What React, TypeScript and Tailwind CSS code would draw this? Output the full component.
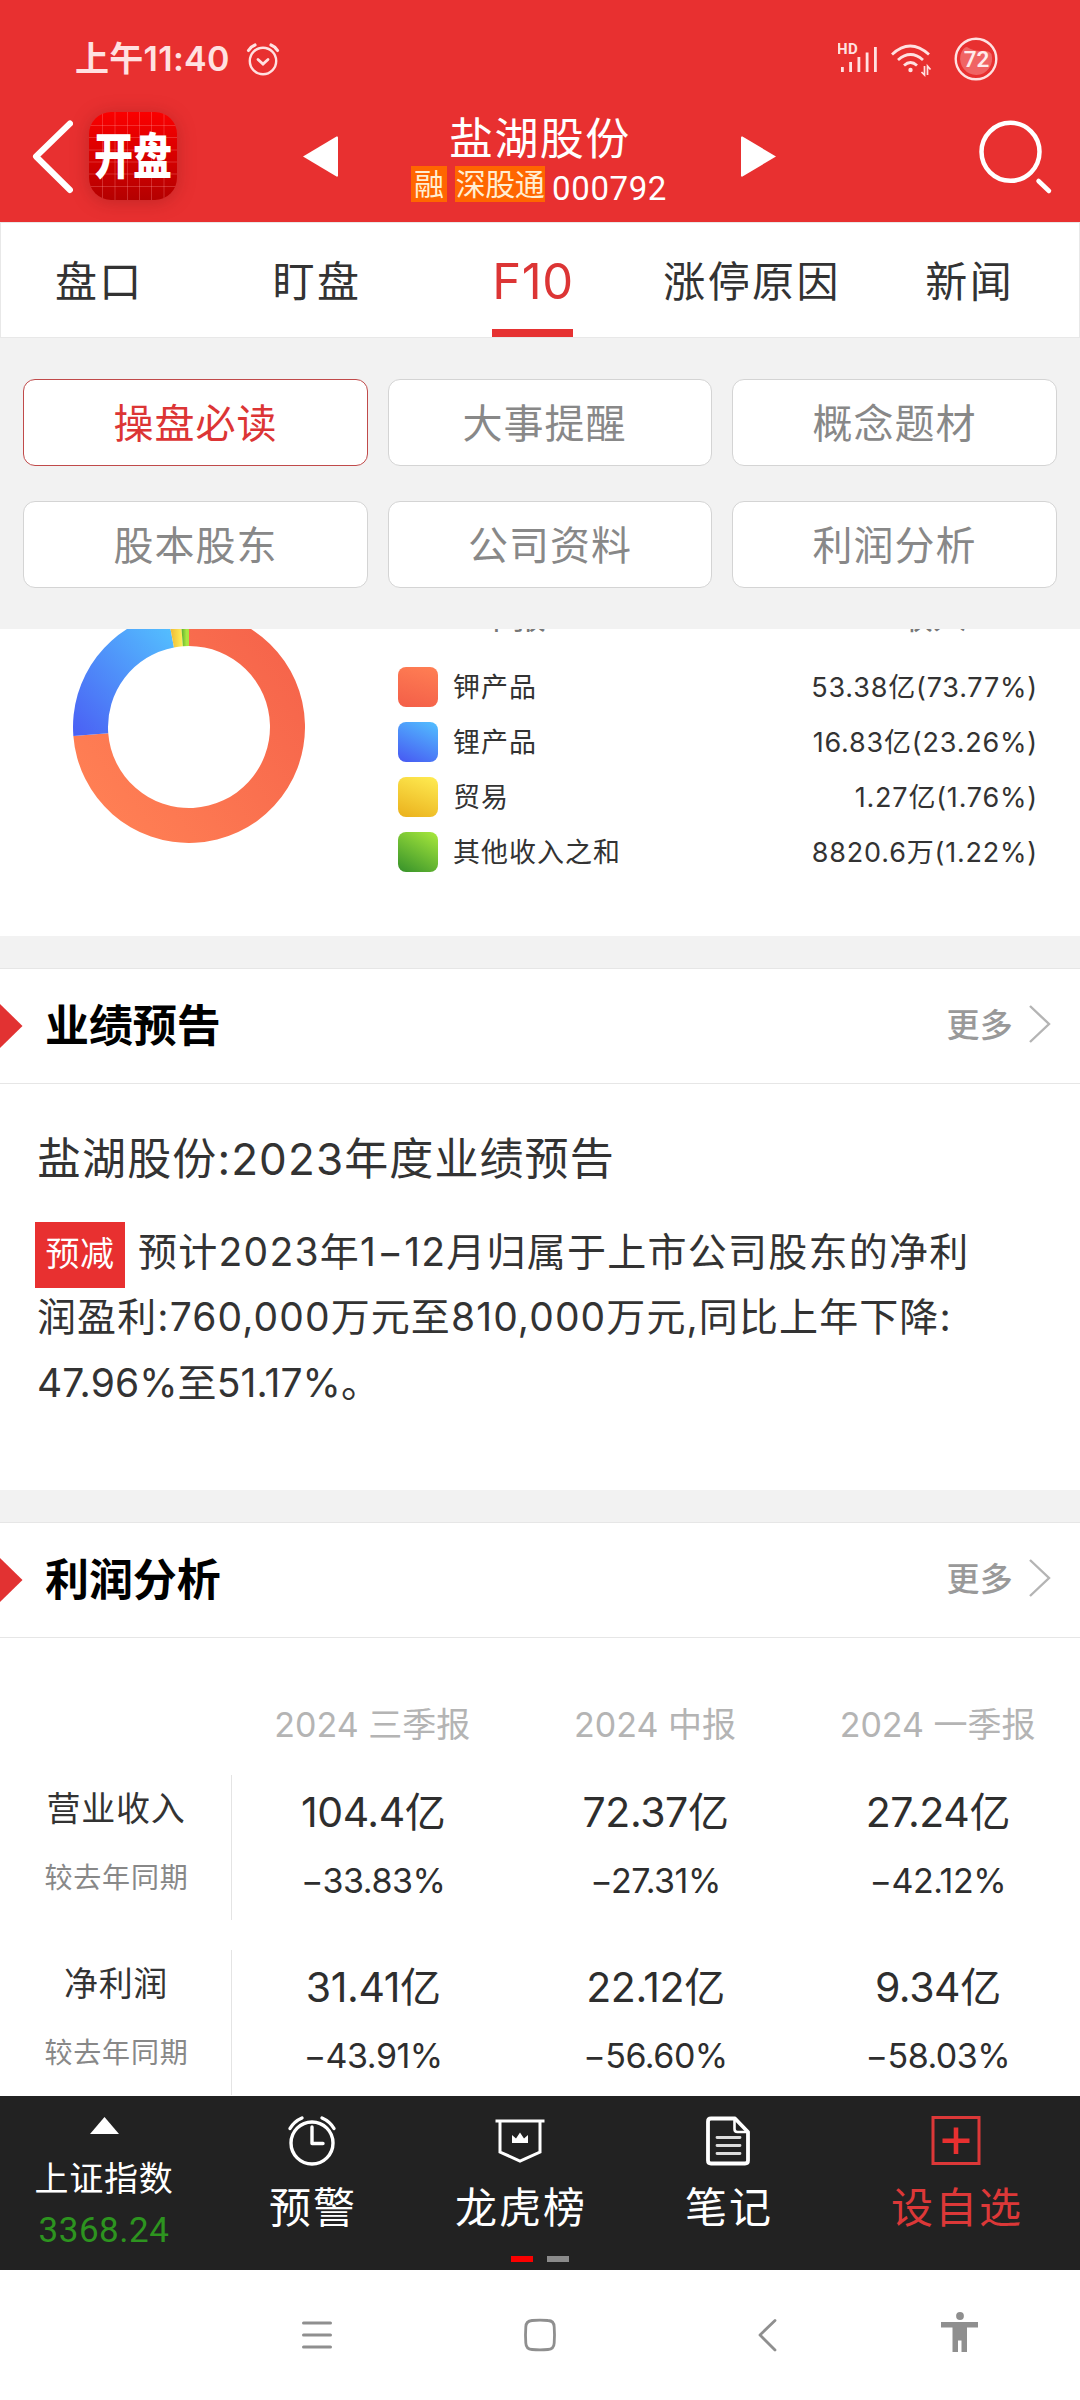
import { useState } from 'react'
import clsx from 'clsx'

const TABS = ['盘口', '盯盘', 'F10', '涨停原因', '新闻'] as const

const CATEGORIES = ['操盘必读', '大事提醒', '概念题材', '股本股东', '公司资料', '利润分析'] as const

const PRODUCTS = [
  { name: '钾产品', value: '53.38亿(73.77%)', share: 73.77, swatch: 'bg-linear-[15deg] from-[#f35e48] to-[#ff7f54]' },
  { name: '锂产品', value: '16.83亿(23.26%)', share: 23.26, swatch: 'bg-linear-[25deg] from-[#4757f2] to-[#52c0ff]' },
  { name: '贸易', value: '1.27亿(1.76%)', share: 1.76, swatch: 'bg-linear-[20deg] from-[#eab01c] to-[#ffec52]' },
  { name: '其他收入之和', value: '8820.6万(1.22%)', share: 1.22, swatch: 'bg-linear-[30deg] from-[#35912a] to-[#a9e93c]' },
]

const PERIODS = ['2024 三季报', '2024 中报', '2024 一季报']

const PROFIT_ROWS = [
  {
    label: '营业收入',
    cells: [
      { amount: '104.4亿', change: '−33.83%' },
      { amount: '72.37亿', change: '−27.31%' },
      { amount: '27.24亿', change: '−42.12%' },
    ],
  },
  {
    label: '净利润',
    cells: [
      { amount: '31.41亿', change: '−43.91%' },
      { amount: '22.12亿', change: '−56.60%' },
      { amount: '9.34亿', change: '−58.03%' },
    ],
  },
]

function StatusBar() {
  return (
    <div className="flex h-[82px] items-center pl-[75px] pr-[82px] pt-[36px] text-[#ffe1e1]">
      <span className="text-[34px] font-semibold leading-[46px] tracking-[0.3px]">上午11:40</span>
      <svg className="ml-[16px]" width="34" height="34" viewBox="0 0 34 34" fill="none" stroke="currentColor" strokeWidth="2.4" strokeLinecap="round">
        <circle cx="17" cy="19" r="13.2" />
        <path d="M2.5 8.5Q5 4.5 9 3M31.5 8.5Q29 4.5 25 3" strokeWidth="3.2" />
        <path d="M12 17.5L17 22L22 17.5" strokeWidth="2.8" />
      </svg>
      <div className="ml-auto flex items-center">
        <svg width="44" height="36" viewBox="0 0 44 36" fill="currentColor">
          <text x="-1" y="13" fontSize="15" fontWeight="700" fontFamily="Roboto, sans-serif" letterSpacing="0.4">HD</text>
          <rect x="3" y="26" width="2.8" height="5" />
          <rect x="11.2" y="21" width="2.8" height="10" />
          <rect x="19.5" y="16" width="2.8" height="15" />
          <rect x="27.7" y="11.5" width="2.8" height="19.5" />
          <rect x="36" y="6" width="2.8" height="25" />
        </svg>
        <svg className="ml-[9px]" width="41" height="36" viewBox="0 0 41 36" fill="none" stroke="currentColor" strokeWidth="2.8">
          <path d="M1 13.5Q19 -3.5 38 13.5" />
          <path d="M7 19Q19.500 8 32 19" />
          <path d="M13 24.5Q19.500 18.500 26 24.5" />
          <circle cx="19.5" cy="29" r="2.2" fill="currentColor" stroke="none" />
          <path d="M33.5 25V34L30.500 31M36.500 34V25L39.500 28.500" strokeWidth="1.700" />
        </svg>
        <svg className="ml-[22px]" width="44" height="46" viewBox="0 0 44 46">
          <circle cx="22" cy="23" r="20.3" fill="none" stroke="currentColor" strokeWidth="2.4" />
          <path d="M6.5 19Q9 11 13 11Q19 15 27 15Q34 14 37.5 18A16 16.500 0 1 1 6.500 19Z" fill="#f06464" />
          <text x="22.5" y="31" textAnchor="middle" fontSize="22.5" fontWeight="600" fontFamily="Roboto, sans-serif" fill="#ffecec">72</text>
        </svg>
      </div>
    </div>
  )
}

function AppLogo() {
  return (
    <div className="relative ml-[16px] flex h-[88px] w-[88px] items-center justify-center overflow-hidden rounded-[22px] bg-linear-to-b from-[#fb0000] to-[#b40000] shadow-[0_2px_18px_rgba(120,20,20,0.35)]">
      <svg className="absolute inset-0" width="88" height="88" viewBox="0 0 88 88" stroke="rgba(255,150,150,0.3)" strokeWidth="1">
        <path d="M13.5 0V88M26 0V88M38.5 0V88M50.5 0V88M62.5 0V88M75 0V88" />
        <path d="M0 13.5H88M0 25.5H88M0 38H88M0 50H88M0 62H88M0 74.5H88" />
      </svg>
      <span className="relative -ml-px scale-x-[0.83] scale-y-[1.05] whitespace-nowrap text-[47px] font-black leading-[88px] text-white">开盘</span>
    </div>
  )
}

function TopBar() {
  return (
    <div className="flex h-[140px] items-start pt-[30px] text-white">
      <svg className="ml-[30px] mt-[5px]" width="43" height="80" viewBox="0 0 43 80" fill="none" stroke="currentColor" strokeWidth="6" strokeLinecap="round" strokeLinejoin="round">
        <path d="M40 6.5L6 39.5L40 73" />
      </svg>
      <AppLogo />
      <svg className="ml-[126px] mt-[24px]" width="35" height="41" viewBox="0 0 35 41" fill="currentColor">
        <path d="M0 20.5L33.5 0.5Q35 0 35 1.5V39.5Q35 41 33.5 40.5Z" />
      </svg>
      <div className="ml-[73px] w-[256px]">
        <div className="-mt-[2px] h-[56px] whitespace-nowrap pl-[38px] text-[44px] leading-[58px] tracking-[1.4px]">盐湖股份</div>
        <div className="flex h-[36px] text-center text-[30px] leading-[36px]">
          <span className="h-[36px] w-[36px] bg-[#ff6600] text-[#ffeed2]">融</span>
          <span className="ml-[8px] h-[36px] w-[91px] bg-[#ff6600] tracking-[-0.6px] text-[#ffeed2]">深股通</span>
          <span className="ml-[7px] pt-[5px] font-[Roboto] text-[33px] tracking-[0.6px]">000792</span>
        </div>
      </div>
      <svg className="ml-[74px] mt-[24px]" width="35" height="41" viewBox="0 0 35 41" fill="currentColor">
        <path d="M35 20.5L1.5 0.5Q0 0 0 1.5V39.5Q0 41 1.5 40.5Z" />
      </svg>
      <svg className="ml-[200px] mt-[5px]" width="80" height="80" viewBox="0 0 80 80" fill="none" stroke="currentColor" strokeWidth="4.5">
        <circle cx="34.5" cy="34.8" r="29" />
        <path d="M62.5 64L73 74" strokeLinecap="round" />
      </svg>
    </div>
  )
}

function SectionHeader({ title }: { readonly title: string }) {
  return (
    <div className="flex h-[116px] items-center border-y border-[#e6e6e6]">
      <svg width="23" height="44" viewBox="0 0 23 44" fill="#e23232">
        <path d="M0 0L22.5 22L0 44Z" />
      </svg>
      <h2 className="ml-[22px] text-[44px] font-semibold leading-[60px] tracking-[-0.1px] text-black">{title}</h2>
      <button className="-mt-[5px] ml-auto mr-[29px] flex items-center">
        <span className="pt-[3px] text-[33px] font-medium leading-[40px] tracking-[0.3px] text-[#999]">更多</span>
        <svg className="ml-[14px]" width="24" height="40" viewBox="0 0 24 40" fill="none" stroke="#b4b4b4" strokeWidth="2.4">
          <path d="M3 2L22 20L3 38" />
        </svg>
      </button>
    </div>
  )
}

// Point on a circle, angle measured clockwise from 12 o'clock
function polar(r: number, turn: number) {
  const a = turn * Math.PI * 2
  return `${(116 + r * Math.sin(a)).toFixed(2)} ${(116 - r * Math.cos(a)).toFixed(2)}`
}

function arcPath(from: number, to: number) {
  const large = to - from > 0.5 ? 1 : 0
  return `M${polar(116, from)}A116 116 0 ${large} 1 ${polar(116, to)}L${polar(81, to)}A81 81 0 ${large} 0 ${polar(81, from)}Z`
}

function Donut() {
  let start = 0
  return (
    <svg className="-mt-[18px] ml-[73px] shrink-0" width="232" height="232" viewBox="0 0 232 232">
      <defs>
        <linearGradient id="slice0" x1="0.9" y1="0" x2="0" y2="0.7">
          <stop offset="0" stopColor="#f5624a" />
          <stop offset="1" stopColor="#ff7f54" />
        </linearGradient>
        <linearGradient id="slice1" x1="0" y1="1" x2="0.9" y2="0">
          <stop offset="0" stopColor="#4a5ff4" />
          <stop offset="1" stopColor="#54c2ff" />
        </linearGradient>
        <linearGradient id="slice2">
          <stop offset="0.2" stopColor="#efba35" />
          <stop offset="1" stopColor="#fff05a" />
        </linearGradient>
        <linearGradient id="slice3">
          <stop offset="0" stopColor="#4a9f2c" />
          <stop offset="0.7" stopColor="#a9e63f" />
        </linearGradient>
      </defs>
      {PRODUCTS.map((p, i) => {
        const from = start
        start = Math.min(1, start + p.share / 100)
        return <path key={p.name} d={arcPath(from, start)} fill={`url(#slice${i})`} />
      })}
    </svg>
  )
}

function RevenueBreakdown() {
  return (
    <div className="flex h-[307px] overflow-hidden bg-white">
      <Donut />
      <div className="ml-[93px] mr-[42px] flex-1">
        {/* Column titles, mostly scrolled under the category grid */}
        <div className="-mt-[28px] flex h-[32px] text-[33px] leading-[32px] text-[#777]">
          <span className="ml-[82px]">中报</span>
          <span className="ml-auto mr-[72px]">收入</span>
        </div>
        <ul className="mt-[34px] flex flex-col gap-[15px]">
          {PRODUCTS.map((p) => (
            <li key={p.name} className="flex h-[40px] items-start text-[27px] leading-[42px] text-[#333]">
              <span className={clsx('h-[40px] w-[40px] rounded-[8px]', p.swatch)} />
              <span className="ml-[15px] tracking-[1px]">{p.name}</span>
              <span className="ml-auto tracking-[0.8px]">{p.value}</span>
            </li>
          ))}
        </ul>
      </div>
    </div>
  )
}

function Forecast() {
  return (
    <section className="bg-white">
      <SectionHeader title="业绩预告" />
      <div className="h-[406px] px-[35px] pt-[45px] text-[#333]">
        <h3 className="pl-[2px] text-[44px] leading-[60px] tracking-[1.1px]">盐湖股份:2023年度业绩预告</h3>
        <div className="mt-[33px] text-[39px] leading-[66px]">
          <div className="flex">
            <span className="h-[66px] w-[90px] bg-[#e83030] text-center text-[34px] leading-[63px] tracking-[0.6px] text-white">预减</span>
            <span className="ml-[13px] whitespace-nowrap leading-[59px] tracking-[1.25px]">预计2023年1−12月归属于上市公司股东的净利</span>
          </div>
          <div className="-mt-[4px] whitespace-nowrap pl-[2px] tracking-[1.1px]">润盈利:760,000万元至810,000万元,同比上年下降:</div>
          <div className="pl-[2px] tracking-[0.1px]">47.96%至51.17%。</div>
        </div>
      </div>
    </section>
  )
}

function ProfitTable() {
  return (
    <section className="h-[574px] overflow-hidden bg-white">
      <SectionHeader title="利润分析" />
      <div className="ml-[231px] mt-[61px] grid w-[848px] grid-cols-3 text-center text-[34px] leading-[52px] text-[#b4b4b4]">
        {PERIODS.map((p) => (
          <span key={p}>{p}</span>
        ))}
      </div>
      <div className="mt-[24px] flex flex-col gap-[30px]">
        {PROFIT_ROWS.map((row) => (
          <div key={row.label} className="flex h-[145px]">
            <div className="w-[232px] border-r border-[#e4e4e4] pt-[9px] text-center">
              <div className="h-[50px] pl-px text-[34px] leading-[50px] tracking-[0.7px] text-[#333]">{row.label}</div>
              <div className="mt-[19px] h-[50px] pl-[2px] text-[28px] leading-[50px] tracking-[0.8px] text-[#888]">较去年同期</div>
            </div>
            <div className="grid w-[847px] grid-cols-3 pt-[9px] text-center text-[#2e2e2e]">
              {row.cells.map((c) => (
                <div key={c.amount}>
                  <div className="h-[56px] text-[41px] leading-[56px] tracking-[-0.4px]">{c.amount}</div>
                  <div className="mt-[16px] h-[50px] text-[34px] leading-[50px] tracking-[-0.5px]">{c.change}</div>
                </div>
              ))}
            </div>
          </div>
        ))}
      </div>
    </section>
  )
}

function ActionItem({ label, icon, className }: { readonly label: string; readonly icon: React.ReactNode; readonly className?: string }) {
  return (
    <button className={clsx('flex flex-col items-center pt-[19px]', className)}>
      {icon}
      <span className="mt-[13px] pl-[2px] text-[42px] leading-[56px] tracking-[2px]">{label}</span>
    </button>
  )
}

function ActionBar() {
  return (
    <div className="relative flex h-[174px] bg-[#222] text-white">
      <button className="flex w-[208px] flex-col items-center pt-[21px]">
        <svg width="29" height="17" viewBox="0 0 29 17" fill="currentColor">
          <path d="M14.5 0L29 17H0Z" />
        </svg>
        <span className="mt-[21px] text-[34px] leading-[48px] tracking-[0.8px]">上证指数</span>
        <span className="mt-[6px] font-[Roboto] text-[35px] leading-[44px] tracking-[0.5px] text-[#2d941f]">3368.24</span>
      </button>
      <ActionItem
        className="w-[208px]"
        label="预警"
        icon={
          <svg width="50" height="52" viewBox="0 0 50 52" fill="none" stroke="currentColor" strokeWidth="3.4" strokeLinecap="round" strokeLinejoin="round">
            <circle cx="25" cy="28" r="21" />
            <path d="M25 12V28.5H36" />
            <path d="M3 13.5Q7 6.5 15 3M47 13.5Q43 6.5 35 3" />
          </svg>
        }
      />
      <ActionItem
        className="w-[208px]"
        label="龙虎榜"
        icon={
          <svg width="50" height="52" viewBox="0 0 50 52" fill="none" stroke="currentColor" strokeWidth="3">
            <path d="M0.5 6H49.5M5 6V37L25 46L45 37V6" />
            <path d="M17 28V20L21 23.5L25 17.5L29 23.5L33 20V28Z" fill="currentColor" stroke="none" />
          </svg>
        }
      />
      <ActionItem
        className="w-[208px]"
        label="笔记"
        icon={
          <svg width="50" height="52" viewBox="0 0 50 52" fill="none" stroke="currentColor" strokeWidth="3.8" strokeLinejoin="round">
            <path d="M32 3.5H8Q5 3.5 5 6.5V45.5Q5 48.5 8 48.5H42Q45 48.5 45 45.5V17Z" />
            <path d="M31.5 4V14Q31.5 17 34.5 17H44" strokeWidth="2.6" />
            <path d="M14 22.5H37M14 30.5H37M14 38.5H37" stroke="#dcdcdc" strokeWidth="2.8" strokeLinecap="round" />
          </svg>
        }
      />
      <ActionItem
        className="w-[248px] text-[#dc3838]"
        label="设自选"
        icon={
          <svg width="50" height="52" viewBox="0 0 50 52" fill="none" stroke="currentColor">
            <rect x="2" y="2.5" width="46" height="46" strokeWidth="3" />
            <path d="M25 12.5V39M11.5 25.7H38.5" stroke="#e83030" strokeWidth="4.6" />
          </svg>
        }
      />
      {/* Page indicator */}
      <div className="absolute bottom-[8px] left-[511px] flex gap-[14px]">
        <span className="h-[6px] w-[22px] bg-[#fb0000]" />
        <span className="h-[6px] w-[22px] bg-[#8b8b8b]" />
      </div>
    </div>
  )
}

function SystemNav() {
  return (
    <div className="flex h-[130px] items-center bg-white text-[#8f8f8f]">
      <svg className="ml-[301px]" width="32" height="34" viewBox="0 0 32 34" stroke="currentColor" strokeWidth="3" strokeLinecap="round">
        <path d="M2.5 5H29.5M2.5 17H29.5M2.5 29H29.5" />
      </svg>
      <svg className="ml-[190px]" width="34" height="34" viewBox="0 0 34 34" fill="none" stroke="currentColor" strokeWidth="2.8">
        <path d="M9 2.5Q17 1.7 25 2.5Q31 2.7 31.2 9Q31.8 17 31.2 25Q31 31 25 31.5Q17 32.3 9 31.5Q3 31 2.8 25Q2.2 17 2.8 9Q3 3 9 2.5Z" />
      </svg>
      <svg className="ml-[200px]" width="20" height="36" viewBox="0 0 20 36" fill="none" stroke="currentColor" strokeWidth="2.8" strokeLinecap="round" strokeLinejoin="round">
        <path d="M18 3.5L3 18L18 33" />
      </svg>
      <svg className="-mt-[6px] ml-[164px]" width="37" height="42" viewBox="0 0 37 42" fill="currentColor">
        <circle cx="19" cy="5" r="3.9" />
        <path d="M0 11H37V16.5H26V41H20.5V29.5H17V41H11.5V16.5H0Z" />
      </svg>
    </div>
  )
}

export default function App() {
  const [tab, setTab] = useState<string>('F10')
  const [category, setCategory] = useState<string>('操盘必读')

  return (
    <div className="h-[2400px] w-[1080px] overflow-hidden bg-[#f2f2f2] font-['Inter','Noto_Sans_CJK_SC',sans-serif]">
      <header className="h-[222px] bg-[#e83030]">
        <StatusBar />
        <TopBar />
      </header>

      <nav className="h-[116px] overflow-hidden border border-[#e8e8e8] bg-white">
        <div className="-ml-[12px] grid h-full w-[1088px] grid-cols-5">
          {TABS.map((t) => (
            <button
              key={t}
              onClick={() => setTab(t)}
              className={clsx(
                'flex flex-col items-center pt-[29px] leading-[60px]',
                t === tab ? 'text-[49px] tracking-[0.5px] text-[#dc3535]' : 'pl-[3px] text-[42px] tracking-[2.4px] text-[#333]'
              )}
            >
              {t}
              {t === tab && <span className="mt-[17px] h-[9px] w-[81px] bg-[#e63232]" />}
            </button>
          ))}
        </div>
      </nav>

      <div className="grid h-[291px] grid-cols-[345px_324px_325px] content-start gap-x-[20px] gap-y-[35px] pl-[23px] pt-[41px]">
        {CATEGORIES.map((c) => (
          <button
            key={c}
            onClick={() => setCategory(c)}
            className={clsx(
              'h-[87px] rounded-[12px] border bg-white pt-[2px] text-[40px] leading-[83px] tracking-[1px]',
              c === category ? 'border-[#c04a4a] text-[#dc3535]' : 'border-[#d4d4d4] text-[#888]',
              c === '大事提醒' && 'pr-[11px]'
            )}
          >
            {c}
          </button>
        ))}
      </div>

      <main className="flex flex-col gap-[32px]">
        <RevenueBreakdown />
        <Forecast />
        <ProfitTable />
      </main>

      <ActionBar />
      <SystemNav />
    </div>
  )
}
